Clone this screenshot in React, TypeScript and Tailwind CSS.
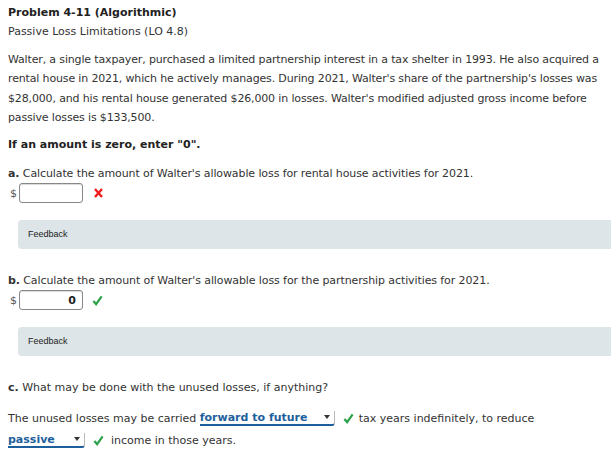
import React from 'react';

const Check = () => (
  <svg width="11" height="11" viewBox="0 0 12 12" className="shrink-0">
    <path d="M1.5 6.5 L4.5 10 L10.5 1.5" fill="none" stroke="#2ba14a" strokeWidth="2.4" strokeLinejoin="miter" />
  </svg>
);

const Cross = () => (
  <svg width="9" height="10" viewBox="0 0 9 10" className="shrink-0">
    <path d="M1 1 L8 9 M8 1 L1 9" stroke="#ee1c1c" strokeWidth="2.4" />
  </svg>
);

const AmountInput: React.FC<{ value?: string }> = ({ value }) => (
  <div className="flex items-center h-[20px]">
    <span className="text-[11px] text-[#555] w-[9px] ml-[2px]">$</span>
    <div className="w-[64px] h-[20px] border border-[#888] rounded-[3px] bg-white shadow-[inset_0_1px_1px_rgba(0,0,0,0.15)] flex items-center justify-end pr-[6px] text-[11px] font-bold text-[#222]">
      {value}
    </div>
  </div>
);

const Feedback = () => (
  <div className="ml-[10px] h-[29px] bg-[#dde5e8] rounded-l-[4px] flex items-center pl-[10px] text-[9px] text-[#222]" style={{ fontFamily: '"Liberation Sans", Arial, sans-serif' }}>
    Feedback
  </div>
);

const Dropdown: React.FC<{ label: string; w: string }> = ({ label, w }) => (
  <span className={`inline-flex items-center justify-between h-[15px] ${w} bg-white border-b-2 border-[#1d5f9c] border-r border-r-[#bbb] rounded-br-[3px] pr-[4px] align-middle`}>
    <span className="font-bold text-[#1d5f9c] leading-none">{label}</span>
    <svg width="6" height="4" viewBox="0 0 6 4"><path d="M0 0 H6 L3 4 Z" fill="#333" /></svg>
  </span>
);

export default function App() {
  return (
    <div className="w-[611px] h-[458px] bg-white overflow-hidden pl-[8px] pt-[3px] text-[11px] text-[#333] leading-[19px]" style={{ fontFamily: '"DejaVu Sans", Verdana, sans-serif' }}>
      <div className="font-bold text-[#222]">Problem 4-11 (Algorithmic)</div>
      <div>Passive Loss Limitations (LO 4.8)</div>

      <p className="mt-[9px] pr-[6px] leading-[19.3px] tracking-[-0.15px]">
        Walter, a single taxpayer, purchased a limited partnership interest in a tax shelter in 1993. He also acquired a rental house in 2021, which he actively manages. During 2021, Walter's share of the partnership's losses was $28,000, and his rental house generated $26,000 in losses. Walter's modified adjusted gross income before passive losses is $133,500.
      </p>

      <div className="mt-[8px] font-bold text-[#222]">If an amount is zero, enter "0".</div>

      <div className="mt-[10px] tracking-[-0.1px]"><span className="font-bold">a.</span> Calculate the amount of Walter's allowable loss for rental house activities for 2021.</div>
      <div className="flex items-center gap-[11px]">
        <AmountInput />
        <Cross />
      </div>
      <div className="mt-[17px]"><Feedback /></div>

      <div className="mt-[22px] tracking-[-0.1px]"><span className="font-bold">b.</span> Calculate the amount of Walter's allowable loss for the partnership activities for 2021.</div>
      <div className="flex items-center gap-[9px]">
        <AmountInput value="0" />
        <Check />
      </div>
      <div className="mt-[17px]"><Feedback /></div>

      <div className="mt-[22px]"><span className="font-bold">c.</span> What may be done with the unused losses, if anything?</div>

      <div className="mt-[10px] flex items-center h-[22px]">
        <span>The unused losses may be carried&nbsp;</span>
        <Dropdown label="forward to future" w="w-[135px]" />
        <span className="ml-[8px]"><Check /></span>
        <span className="ml-[5px]">tax years indefinitely, to reduce</span>
      </div>
      <div className="flex items-center h-[22px]">
        <Dropdown label="passive" w="w-[77px]" />
        <span className="ml-[8px]"><Check /></span>
        <span className="ml-[7px]">income in those years.</span>
      </div>
    </div>
  );
}
